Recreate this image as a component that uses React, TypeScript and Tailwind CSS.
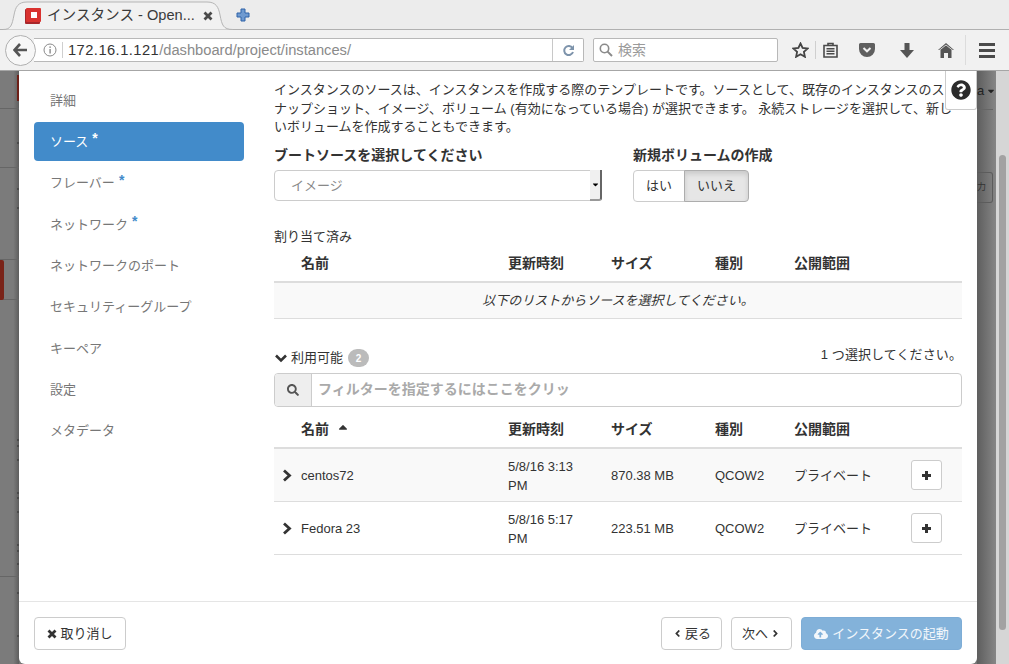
import { FaAngleLeft, FaAngleRight, FaCaretDown, FaCaretUp, FaCloudUploadAlt, FaQuestionCircle, FaSearch } from "react-icons/fa";

const FONT = "[font-family:'Liberation_Sans','Noto_Sans_CJK_JP',sans-serif]";

const NAV = [
  { label: "詳細" },
  { label: "ソース", req: true, active: true },
  { label: "フレーバー", req: true },
  { label: "ネットワーク", req: true },
  { label: "ネットワークのポート" },
  { label: "セキュリティーグループ" },
  { label: "キーペア" },
  { label: "設定" },
  { label: "メタデータ" },
];

const IMAGES = [
  { name: "centos72", time: "5/8/16 3:13 PM", size: "870.38 MB", alt: true },
  { name: "Fedora 23", time: "5/8/16 5:17 PM", size: "223.51 MB", alt: false },
];

// bits of the page that stick out beside the modal
const LEFT_TICKS = [71, 117, 136, 368, 374, 388, 421, 426, 440, 473, 479, 492, 521, 564];
const LEFT_LINES = [37, 96, 188, 228, 505];

function Cross({ size, color }: { size: number; color: string }) {
  return (
    <svg width={size} height={size} viewBox="0 0 10 10" className="shrink-0">
      <path d="m1.500 1.500 7 7m0-7-7 7" fill="none" stroke={color} strokeWidth="2.800" />
    </svg>
  );
}

function Browser() {
  return (
    <div className="h-[71px] shrink-0 bg-[#f1f1f1] border-b border-[#a6a6a6] flex flex-col">
      {/* tabs */}
      <div className="h-[30px] shrink-0 bg-[#ececec] flex items-end border-b border-[#b0b0b0]">
        <div className="relative ml-[3px] -mb-px h-[29px] w-[230px] flex items-center pl-[22px] pr-[20px]">
          <svg width="230" height="29" viewBox="0 0 230 29" className="absolute left-0 top-0">
            <path d="M0 28.500C8 28.500 9 24 11 14 12.500 6 15 1 24 1H204C213 1 215.500 6 217 14 219 24 220 28.500 230 28.500" fill="#f1f1f1" stroke="#b5b5b5" />
          </svg>
          <svg width="16" height="16" viewBox="0 0 16 16" className="relative shrink-0">
            <rect x="0" y="1" width="15" height="15" rx="1" fill="#a8262a" />
            <rect x="1" y="0" width="15" height="14" rx="1" fill="#d9322f" />
            <rect x="6" y="4" width="6" height="6" fill="#fff" />
          </svg>
          <span className="relative ml-[6px] flex-1 text-[14.600px] leading-none text-[#3a3a3a] whitespace-nowrap">インスタンス - Open...</span>
          <span className="relative">
            <Cross size={10} color="#4a4a4a" />
          </span>
        </div>
        <svg width="14" height="14" viewBox="0 0 14 14" className="ml-[3px] mb-[7px]">
          <path d="M5 1h4v4h4v4H9v4H5V9H1V5h4z" fill="#6f9ad0" stroke="#2f62a8" strokeWidth="1" />
        </svg>
      </div>
      {/* nav bar */}
      <div className="flex-1 relative flex items-center pl-[5px] pr-[10px]">
        <div className="z-10 w-[31px] h-[31px] rounded-full border border-[#b0b0b0] bg-[#f7f7f7] flex items-center justify-center">
          <svg width="15" height="14" viewBox="0 0 15 14">
            <path d="M7 1 1.500 7 7 13M2 7h12" fill="none" stroke="#555" strokeWidth="2.600" />
          </svg>
        </div>
        <div className="-ml-[2px] w-[550px] h-[24px] bg-white border border-l-0 border-[#b8b8b8] rounded-r-[2px] flex items-center">
          <svg width="14" height="14" viewBox="0 0 14 14" className="ml-[9px] shrink-0">
            <circle cx="7" cy="7" r="6" fill="none" stroke="#8a8a8a" />
            <rect x="6.400" y="6" width="1.400" height="4.500" fill="#8a8a8a" />
            <rect x="6.400" y="3.400" width="1.400" height="1.500" fill="#8a8a8a" />
          </svg>
          <div className="ml-[5px] h-[16px] w-px bg-[#cfcfcf]" />
          <span className="ml-[5px] flex-1 text-[14.700px] whitespace-nowrap text-[#8a8a8a]">
            <span className="text-[#333] tracking-[0.450px]">172.16.1.121</span>/dashboard/project/instances/
          </span>
          <div className="h-full w-[31px] border-l border-[#c8c8c8] flex items-center justify-center">
            <svg width="13" height="13" viewBox="0 0 13 13">
              <path d="M10.500 4A4.500 4.500 0 1 0 11 8" fill="none" stroke="#7d93ab" strokeWidth="2" />
              <path d="M12 1v5H7z" fill="#7d93ab" />
            </svg>
          </div>
        </div>
        <div className="ml-[9px] w-[185px] h-[24px] bg-white border border-[#b8b8b8] rounded-[2px] flex items-center pl-[5px]">
          <svg width="14" height="14" viewBox="0 0 14 14">
            <circle cx="5.500" cy="5.500" r="4.200" fill="none" stroke="#8a8a8a" strokeWidth="1.600" />
            <path d="m8.600 8.600 4.400 4.400" stroke="#8a8a8a" strokeWidth="2" />
          </svg>
          <span className="ml-[5px] text-[14px] leading-none text-[#9a9a9a]">検索</span>
        </div>
        <svg width="17" height="16" viewBox="0 0 17 16" className="ml-[14px]">
          <path d="M8.500 1.500 10.600 6l5 .6-3.700 3.300 1 4.900-4.400-2.500-4.400 2.500 1-4.900L1.400 6.600l5-.6z" fill="none" stroke="#444" strokeWidth="1.800" />
        </svg>
        <div className="ml-[6px] w-px h-[18px] bg-[#cfcfcf]" />
        <svg width="15" height="16" viewBox="0 0 15 16" className="ml-[7px]">
          <path d="M1 3.500h13v11.500H1zM5 3.500V1.500h5v2" fill="none" stroke="#4a4a4a" strokeWidth="1.600" />
          <path d="M3.500 6.800h8M3.500 9.300h8M3.500 11.800h8" stroke="#4a4a4a" strokeWidth="1.400" />
        </svg>
        <svg width="16" height="14" viewBox="0 0 16 14" className="ml-[21px]">
          <path d="M1.500 0h13A1.500 1.500 0 0 1 16 1.500V6A8 8 0 0 1 0 6V1.500A1.500 1.500 0 0 1 1.500 0z" fill="#5f5f5f" />
          <path d="m4.500 5 3.500 3.300L11.500 5" fill="none" stroke="#f1f1f1" strokeWidth="2" />
        </svg>
        <svg width="14" height="15" viewBox="0 0 14 15" className="ml-[25px]">
          <path d="M4.500 0h5v7H14l-7 8-7-8h4.500z" fill="#555" />
        </svg>
        <svg width="16" height="15" viewBox="0 0 16 15" className="ml-[24px]">
          <path d="M8 0 16 7h-2.500v8h-3.500v-5H6v5H2.500V7H0z" fill="#555" />
          <path d="M1 7.500 8 2l7 5.500" fill="none" stroke="#f1f1f1" strokeWidth="0.800" />
        </svg>
        <div className="ml-[11px] w-px h-[30px] bg-[#dcdcdc]" />
        <div className="ml-[13px] w-[16px] flex flex-col gap-[3px]">
          <div className="h-[3px] bg-[#4a4a4a]" />
          <div className="h-[3px] bg-[#4a4a4a]" />
          <div className="h-[3px] bg-[#4a4a4a]" />
        </div>
      </div>
    </div>
  );
}

function Sidebar() {
  return (
    <div className="w-[240px] shrink-0 pl-[15px] pt-[10px]">
      {NAV.map((n) => (
        <div
          key={n.label}
          className={`h-[39px] mb-[2.300px] w-[210px] rounded-[4px] pl-[16px] flex items-center text-[13px] ${n.active ? "bg-[#428bca] text-white" : "text-[#777]"}`}
        >
          {n.label}
          {n.req && (
            <span className={`ml-[4px] -mt-[7px] text-[14px] leading-none font-bold ${n.active ? "text-white" : "text-[#428bca]"}`}>*</span>
          )}
        </div>
      ))}
    </div>
  );
}

function Cols({ sort }: { sort?: boolean }) {
  return (
    <div className={`grid grid-cols-[207px_103px_104px_79px_1fr] items-center font-bold text-[14px] text-[#333] pl-[27px] h-full ${sort ? "pb-[2px]" : ""}`}>
      <div className="flex items-center">
        名前
        {sort && <FaCaretUp className="ml-[7px] -mt-[4px] text-[14px] text-[#333]" />}
      </div>
      <div>更新時刻</div>
      <div>サイズ</div>
      <div>種別</div>
      <div>公開範囲</div>
    </div>
  );
}

function Row({ name, time, size, alt }: { name: string; time: string; size: string; alt: boolean }) {
  return (
    <div className={`grid grid-cols-[27px_207px_103px_104px_79px_117px_1fr] items-center h-[53px] border-b border-[#ddd] text-[13px] text-[#333] ${alt ? "bg-[#f9f9f9]" : ""}`}>
      <svg width="10" height="13" viewBox="0 0 10 13" className="ml-[8px]">
        <path d="m2 1.500 5.500 5-5.500 5" fill="none" stroke="#333" strokeWidth="2.800" />
      </svg>
      <div className="pt-[2px]">{name}</div>
      <div className="w-[76px] leading-[19px] pt-[2px]">{time}</div>
      <div className="pt-[2px]">{size}</div>
      <div className="pt-[2px]">QCOW2</div>
      <div className="pt-[2px]">プライベート</div>
      <div className="w-[31px] h-[30px] bg-white border border-[#ccc] rounded-[3px] flex items-center justify-center">
        <svg width="9" height="9" viewBox="0 0 9 9">
          <path d="M3 0h3v3h3v3H6v3H3V6H0V3h3z" fill="#333" />
        </svg>
      </div>
    </div>
  );
}

function Main() {
  return (
    <div className="flex-1 min-w-0 pl-[15px] pr-[15px] text-[13px] text-[#333]">
      <p className="pt-[10px] h-[75px] leading-[18.500px] whitespace-pre-line">
        {"インスタンスのソースは、インスタンスを作成する際のテンプレートです。ソースとして、既存のインスタンスのス\nナップショット、イメージ、ボリューム (有効になっている場合) が選択できます。 永続ストレージを選択して、新し\nいボリュームを作成することもできます。"}
      </p>
      <div className="flex h-[66px]">
        <div className="w-[359px]">
          <div className="h-[18px] text-[14px] font-bold leading-[18px]">ブートソースを選択してください</div>
          <div className="relative mt-[6px] w-[328px] h-[31px] bg-white border border-[#ccc] rounded-[4px] pl-[16px] flex items-center text-[#888]">
            イメージ
            <div className="absolute -right-px -top-px bottom-[-1px] w-[12px] bg-[#f0f0f0] border-r-2 border-b-2 border-r-[#666] border-b-[#999] rounded-br-[3px] flex items-center justify-center">
              <FaCaretDown className="text-[9px] text-black" />
            </div>
          </div>
        </div>
        <div>
          <div className="h-[18px] text-[14px] font-bold leading-[18px]">新規ボリュームの作成</div>
          <div className="mt-[6px] flex h-[32px]">
            <div className="w-[52px] bg-white border border-[#ccc] rounded-l-[4px] flex items-center justify-center">はい</div>
            <div className="w-[65px] -ml-px bg-[#e6e6e6] border border-[#adadad] rounded-r-[4px] shadow-[inset_0_3px_5px_rgba(0,0,0,0.125)] flex items-center justify-center">いいえ</div>
          </div>
        </div>
      </div>
      <div className="mt-[16px] h-[18px] leading-[18px] text-[#333]">割り当て済み</div>
      <div className="h-[35px] border-b-2 border-[#ddd] box-content">
        <Cols />
      </div>
      <div className="h-[36px] bg-[#f9f9f9] border-b border-[#ddd] flex items-center justify-center italic">
        以下のリストからソースを選択してください。
      </div>
      <div className="mt-[29px] h-[20px] flex items-center justify-between">
        <div className="flex items-center">
          <svg width="12" height="9" viewBox="0 0 12 9" className="ml-px">
            <path d="m1 1.500 5 5 5-5" fill="none" stroke="#333" strokeWidth="2.600" />
          </svg>
          <span className="ml-[4px]">利用可能</span>
          <span className="ml-[5px] w-[21px] h-[18px] rounded-full bg-[#bbb] text-white text-[10px] font-bold flex items-center justify-center">2</span>
        </div>
        <div className="-mt-[6px] text-[13px] tracking-[0.100px]">1 つ選択してください。</div>
      </div>
      <div className="mt-[5px] h-[34px] flex border border-[#ccc] rounded-[4px] overflow-hidden">
        <div className="w-[37px] bg-[#eee] border-r border-[#ccc] flex items-center justify-center">
          <FaSearch className="text-[12px] text-[#555]" />
        </div>
        <div className="pl-[6px] pb-[2px] flex items-center font-bold text-[14px] text-[#aaa]">フィルターを指定するにはここをクリッ</div>
      </div>
      <div className="h-[34px] mt-[6px] border-b-2 border-[#ddd] box-content">
        <Cols sort />
      </div>
      {IMAGES.map((r) => (
        <Row key={r.name} {...r} />
      ))}
    </div>
  );
}

function Footer() {
  const btn = "h-[33px] bg-white border border-[#ccc] rounded-[4px] flex items-center justify-center text-[13px] text-[#333]";
  return (
    <div className="h-[63px] shrink-0 border-t border-[#e5e5e5] px-[15px] pt-[15px] flex text-[13px]">
      <div className={`${btn} w-[92px] gap-[3px]`}>
        <Cross size={10} color="#333" />
        取り消し
      </div>
      <div className={`${btn} w-[61px] ml-auto`}>
        <FaAngleLeft className="text-[11px] mr-[2px]" />
        戻る
      </div>
      <div className={`${btn} w-[61px] ml-[9px]`}>
        次へ
        <FaAngleRight className="text-[11px] ml-[2px]" />
      </div>
      <div className="h-[33px] w-[161px] ml-[9px] bg-[#83b2da] border border-[#7eadd6] rounded-[4px] flex items-center justify-center text-white/90">
        <FaCloudUploadAlt className="text-[14px] mr-[4px]" />
        インスタンスの起動
      </div>
    </div>
  );
}

export default function App() {
  return (
    <div className={`w-[1009px] h-[664px] overflow-hidden flex flex-col ${FONT}`}>
      <Browser />
      <div className="flex-1 min-h-0 flex relative bg-[#757575]">
        {/* dimmed page behind the modal */}
        <div className="w-[19px] shrink-0 relative bg-gradient-to-r from-[#7b7b7b] from-70% to-[#5e5e5e]">
          {LEFT_LINES.map((y) => (
            <div key={y} className="absolute left-0 right-0 h-px bg-[#666]" style={{ top: y }} />
          ))}
          {LEFT_TICKS.map((y) => (
            <div key={y} className="absolute right-0 w-[2px] h-[2px] bg-[#4a4a4a]" style={{ top: y }} />
          ))}
          <div className="absolute left-[17px] top-[4px] w-[2px] h-[26px] bg-[#6e2018]" />
          <div className="absolute left-0 top-[189px] w-[4px] h-[40px] bg-[#7a2318] rounded-r-[2px]" />
        </div>
        <div className="w-[958px] shrink-0 bg-white flex flex-col rounded-b-[6px] relative">
          <div className="flex-1 min-h-0 flex overflow-hidden">
            <Sidebar />
            <Main />
          </div>
          <Footer />
          <div className="absolute right-0 top-0 w-[32px] h-[39px] bg-white border border-t-0 border-[#ccc] rounded-b-[3px] flex items-center justify-center">
            <FaQuestionCircle className="text-[20px] text-[#2b2b2b]" />
          </div>
        </div>
        <div className="w-[19px] shrink-0 relative overflow-hidden bg-gradient-to-r from-[#5e5e5e] to-[#868686]">
          <div className="absolute left-0 top-[13px] text-[13px] leading-none text-[#222] flex items-center">
            a<FaCaretDown className="ml-[2px] text-[10px]" />
          </div>
          <div className="absolute left-0 right-[3px] top-[38px] h-px bg-[#666]" />
          <div className="absolute left-0 right-[3px] top-[101px] h-[31px] border border-l-0 border-[#5c5c5c] rounded-r-[3px] flex items-center">
            <span className="text-[9px] leading-none text-[#333]">力</span>
          </div>
        </div>
        <div className="flex-1 bg-[#d6d6d6] relative">
          <div className="absolute left-[3px] top-[84px] w-[7px] h-[475px] rounded-full bg-[#a2a2a2]" />
        </div>
      </div>
    </div>
  );
}
